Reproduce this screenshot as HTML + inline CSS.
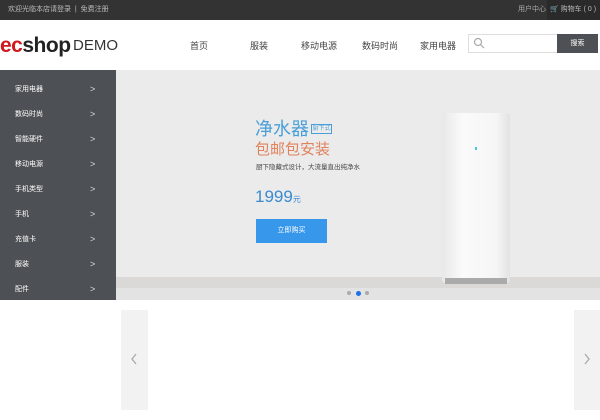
<!DOCTYPE html>
<html><head><meta charset="utf-8"><style>
*{margin:0;padding:0;box-sizing:border-box}
body{width:600px;height:420px;overflow:hidden;background:#fff;font-family:"Liberation Sans","Noto Sans CJK SC",sans-serif;position:relative}
.a{position:absolute;white-space:nowrap}
</style></head><body>
<div class="a" style="left:0;top:0;width:600px;height:20px;background:#333"></div>
<div class="a" style="left:8px;top:5px;font-size:7px;color:#bbb;line-height:10px">欢迎光临本店请登录 &nbsp;| &nbsp;免费注册</div>
<div class="a" style="left:518px;top:5px;font-size:7px;color:#aaa;line-height:10px">用户中心</div>
<div class="a" style="left:547px;top:0;width:53px;height:20px;background:#2a2a2a"></div>
<div class="a" style="left:550px;top:5px;font-size:7px;color:#bbb;line-height:10px">🛒 购物车 ( 0 )</div>

<div class="a" style="left:0;top:34px;font-size:21px;font-weight:bold;line-height:24px;letter-spacing:-0.5px"><span style="color:#d0191f">ec</span><span style="color:#222">shop</span></div>
<div class="a" style="left:73px;top:37px;font-size:15px;color:#333;line-height:18px">DEMO</div>
<div class="a" style="left:190px;top:40px;font-size:9px;color:#444;line-height:12px">首页</div>
<div class="a" style="left:250px;top:40px;font-size:9px;color:#444;line-height:12px">服装</div>
<div class="a" style="left:301px;top:40px;font-size:9px;color:#444;line-height:12px">移动电源</div>
<div class="a" style="left:362px;top:40px;font-size:9px;color:#444;line-height:12px">数码时尚</div>
<div class="a" style="left:420px;top:40px;font-size:9px;color:#444;line-height:12px">家用电器</div>
<div class="a" style="left:468px;top:34px;width:90px;height:19px;border:1px solid #ddd"></div>
<svg class="a" style="left:473px;top:37px" width="12" height="12"><circle cx="5" cy="5" r="3.5" fill="none" stroke="#aaa" stroke-width="1.2"/><line x1="7.5" y1="7.5" x2="11" y2="11" stroke="#aaa" stroke-width="1.2"/></svg>
<div class="a" style="left:557px;top:34px;width:41px;height:19px;background:#4d5155;color:#fff;font-size:7px;text-align:center;line-height:19px">搜索</div>

<div class="a" style="left:116px;top:70px;width:484px;height:230px;background:#ebebeb"></div>
<div class="a" style="left:116px;top:277px;width:484px;height:11px;background:#dbd8d8"></div>
<div class="a" style="left:116px;top:288px;width:484px;height:12px;background:#e3e3e3"></div>
<div class="a" style="left:442px;top:113px;width:68px;height:170px;background:linear-gradient(90deg,#e8e8e8,#fafafa 30%,#f6f6f6 80%,#e2e2e2);border-radius:3px"></div>
<div class="a" style="left:445px;top:278px;width:62px;height:6px;background:#aaa"></div>
<div class="a" style="left:475px;top:147px;width:2px;height:3px;background:#4cd"></div>
<div class="a" style="left:347px;top:291px;width:4px;height:4px;border-radius:2px;background:#aaa"></div>
<div class="a" style="left:356px;top:291px;width:5px;height:5px;border-radius:3px;background:#1a73e8"></div>
<div class="a" style="left:365px;top:291px;width:4px;height:4px;border-radius:2px;background:#aaa"></div>

<div class="a" style="left:255px;top:118px;font-size:18px;color:#4a9fd9;line-height:22px">净水器</div>
<div class="a" style="left:311px;top:124px;width:21px;height:10px;border:1px solid #4a9fd9;font-size:6px;color:#4a9fd9;line-height:8px;text-align:center">厨下式</div>
<div class="a" style="left:255px;top:141px;font-size:15px;color:#e0825c;line-height:18px">包邮包安装</div>
<div class="a" style="left:256px;top:163px;font-size:6.5px;color:#444;line-height:9px">厨下隐藏式设计，大流量直出纯净水</div>
<div class="a" style="left:255px;top:187px;font-size:17px;color:#3a8ad0;line-height:20px">1999<span style="font-size:8px">元</span></div>
<div class="a" style="left:256px;top:219px;width:71px;height:24px;background:#3797ea;color:#fff;font-size:7px;text-align:center;line-height:24px">立即购买</div>

<div class="a" style="left:0;top:70px;width:116px;height:230px;background:#4d5155"></div>
<div class="a" style="left:15px;top:77px;font-size:7px;color:#fff;line-height:25px">家用电器<br>数码时尚<br>智能硬件<br>移动电源<br>手机类型<br>手机<br>充值卡<br>服装<br>配件</div>
<div class="a" style="left:90px;top:77px;font-size:9px;color:#ddd;line-height:25px">&gt;<br>&gt;<br>&gt;<br>&gt;<br>&gt;<br>&gt;<br>&gt;<br>&gt;<br>&gt;</div>

<div class="a" style="left:121px;top:310px;width:27px;height:100px;background:#f2f2f2"></div>
<div class="a" style="left:574px;top:310px;width:26px;height:100px;background:#f2f2f2"></div>
<svg class="a" style="left:130px;top:353px" width="8" height="12"><polyline points="6,1 2,6 6,11" fill="none" stroke="#aaa" stroke-width="1.3"/></svg>
<svg class="a" style="left:583px;top:353px" width="8" height="12"><polyline points="2,1 6,6 2,11" fill="none" stroke="#aaa" stroke-width="1.3"/></svg>
</body></html>
